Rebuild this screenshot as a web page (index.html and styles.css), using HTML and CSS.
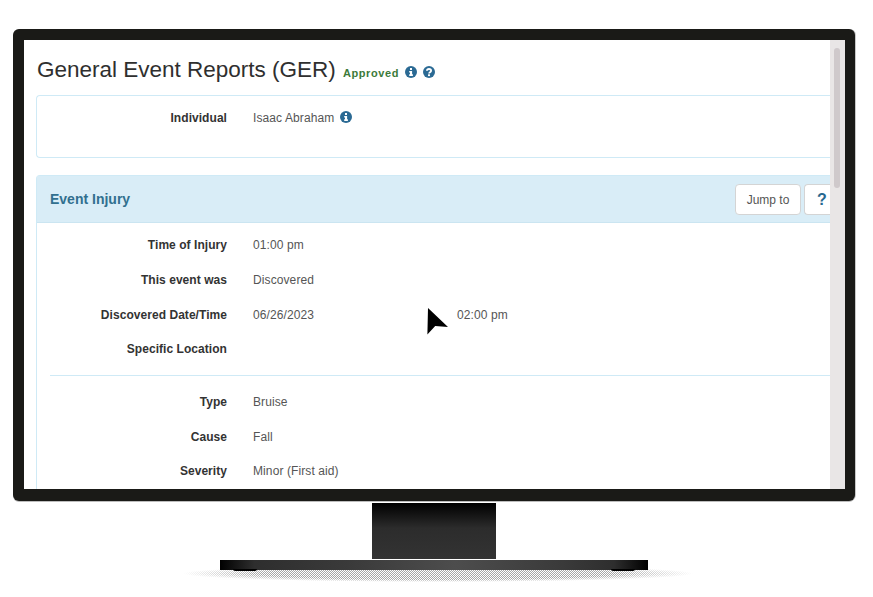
FILE: index.html
```html
<!DOCTYPE html>
<html lang="en">
<head>
<meta charset="utf-8">
<title>General Event Reports</title>
<link rel="stylesheet" href="styles.css">
</head>
<body>
<div class="scene">
  <div class="monitor">
    <div class="screen">
      <main class="page">
        <div class="heading">
          <h1>General Event Reports (GER)</h1>
          <span class="status">Approved</span>
          <svg class="ico" viewBox="0 0 12 12"><circle cx="6" cy="6" r="6"/><rect class="w" x="5" y="2" width="2" height="2"/><path class="w" d="M4.2 5h2.9v3.3h.8V10H4.2V8.3H5V6.6h-.8z"/></svg>
          <svg class="ico" viewBox="0 0 12 12"><circle cx="6" cy="6" r="6"/><path class="q" d="M3.9 4.7C4 3.5 4.9 3 6 3s2.1.6 2.1 1.7c0 1.500-2 1.400-2 2.800"/><rect class="w" x="5" y="8.300" width="2" height="1.800"/></svg>
        </div>
        <section class="card top">
          <div class="row">
            <span class="lbl">Individual</span>
            <span class="val">Isaac Abraham <svg class="ico inline" viewBox="0 0 12 12"><circle cx="6" cy="6" r="6"/><rect class="w" x="5" y="2" width="2" height="2"/><path class="w" d="M4.2 5h2.9v3.300h.8V10H4.200V8.300H5V6.600h-.8z"/></svg></span>
          </div>
        </section>
        <section class="card event">
          <header class="card-head">
            <h2>Event Injury</h2>
            <div class="actions">
              <button class="btn jump">Jump to</button>
              <button class="btn help">?</button>
            </div>
          </header>
          <div class="card-body">
            <div class="row"><span class="lbl">Time of Injury</span><span class="val">01:00 pm</span></div>
            <div class="row"><span class="lbl">This event was</span><span class="val">Discovered</span></div>
            <div class="row"><span class="lbl">Discovered Date/Time</span><span class="val">06/26/2023</span><span class="val">02:00 pm</span></div>
            <div class="row"><span class="lbl">Specific Location</span><span class="val"></span></div>
            <hr>
            <div class="row"><span class="lbl">Type</span><span class="val">Bruise</span></div>
            <div class="row"><span class="lbl">Cause</span><span class="val">Fall</span></div>
            <div class="row"><span class="lbl">Severity</span><span class="val">Minor (First aid)</span></div>
          </div>
        </section>
      </main>
      <div class="scrollbar"><div class="thumb"></div></div>
    </div>
  </div>
  <div class="neck"></div>
  <div class="base"><i class="foot"></i><i class="foot"></i></div>
  <div class="shadow"></div>
  <svg class="cursor" viewBox="0 0 22 28"><path d="M1 1l20 19-12.800-1L.4 27.500z"/></svg>
</div>
</body>
</html>
```

FILE: styles.css
```css
* { box-sizing: border-box; }
html, body { margin: 0; height: 100%; background: #fff; overflow: hidden; }
body { font-family: "Liberation Sans", Arial, sans-serif; }
.scene { position: relative; width: 873px; height: 597px; padding: 29px 0 0 13px; }

.monitor {
  width: 842px; height: 472px; padding: 11px 10px 12px 11px;
  background: #1a1a17; border-radius: 6px;
  box-shadow: 0 1px 0 #bdbdbd, 1px 0 0 #c8c8c8;
}
.screen { display: flex; width: 100%; height: 100%; background: #fff; overflow: hidden; }
.page { flex: none; width: 806px; padding: 0 0 0 12px; overflow: hidden; }
.scrollbar { flex: none; width: 15px; background: #e9e6e6; padding: 8px 5px 0 4px; }
.thumb { height: 140px; background: #cfc9cb; border-radius: 3px; }

.heading { display: flex; align-items: center; height: 55px; padding-top: 4px; }
h1 { margin: 0 7px 0 0; padding-left: 1px; font-size: 22.500px; font-weight: 400; color: #2f2f2f; white-space: nowrap; }
.status { margin: 6px 6px 0 0; font-size: 11px; font-weight: 700; letter-spacing: .6px; color: #3c7a3a; }
.ico { width: 12px; height: 12px; flex: none; margin: 4px 6px 0 0; fill: #2b6a94; }
.ico .w { fill: #fff; }
.ico .q { fill: none; stroke: #fff; stroke-width: 1.800; }
.ico.inline { margin: 0 0 0 2px; vertical-align: -1px; }

.card { width: 794px; border: 1px solid #cfeaf6; border-right: 0; border-radius: 4px 0 0 4px; }
.top { height: 63px; padding: 5px 0 0 13px; }
.event { margin-top: 17px; }
.card-head {
  display: flex; align-items: center; justify-content: space-between;
  height: 47px; padding: 0 0 0 13px; background: #d9edf7;
  border-bottom: 1px solid #cbe5f1;
}
h2 { margin: 0; font-size: 14px; font-weight: 700; color: #31708f; }
.actions { display: flex; gap: 3px; width: 95px; flex: none; overflow: hidden; margin-top: 1px; }
.btn {
  flex: none; height: 31px; background: #fff; border: 1px solid #d4d4d4; border-radius: 4px;
  font-family: inherit; padding: 0;
}
.jump { width: 66px; font-size: 12px; color: #555; }
.help { width: 26px; font-size: 16px; font-weight: 700; color: #28688f; text-align: left; padding-left: 12px; border-right: 0; border-radius: 4px 0 0 4px; }

.card-body { padding: 5px 0 30px 13px; }
.row { display: grid; grid-template-columns: 177px 204px 1fr; column-gap: 26px; height: 34.700px; align-items: center; font-size: 12px; letter-spacing: .1px; }
.row .val + .val { margin-left: -26px; }
.lbl { text-align: right; font-weight: 700; color: #333; white-space: nowrap; letter-spacing: .05px; }
.val { color: #555; white-space: nowrap; }
hr { height: 1px; margin: 8px 0 9px 0; border: 0; background: #cfeaf6; }

.neck {
  width: 124px; height: 56px; margin: 2px 0 0 359px;
  background: linear-gradient(#000, #2c2c2c 45%, #333);
}
.base {
  position: relative; z-index: 1; display: flex; justify-content: space-between;
  width: 428px; height: 10px; margin: 1px 0 0 207px; padding: 0 13px;
  background: linear-gradient(90deg, #000, #2e2e2e 8%, #3a3a3a 30%, #4d4d4d 55%, #3a3a3a 80%, #2e2e2e 92%, #000);
}
.foot { width: 24px; height: 11px; background: #000; border-radius: 0 0 2px 2px; clip-path: inset(9px 0 0 0); }
.shadow {
  position: absolute; left: 183px; top: 565px; width: 510px; height: 17px;
  background: repeating-conic-gradient(#a6a6a6 0 25%, #fff 0 50%) 0 0 / 2px 2px;
  -webkit-mask-image: radial-gradient(closest-side, #000 70%, transparent);
  mask-image: radial-gradient(closest-side, #000 70%, transparent);
}
.cursor { position: absolute; left: 427px; top: 307px; width: 22px; height: 28px; }
.cursor path { fill: #000; }
```
